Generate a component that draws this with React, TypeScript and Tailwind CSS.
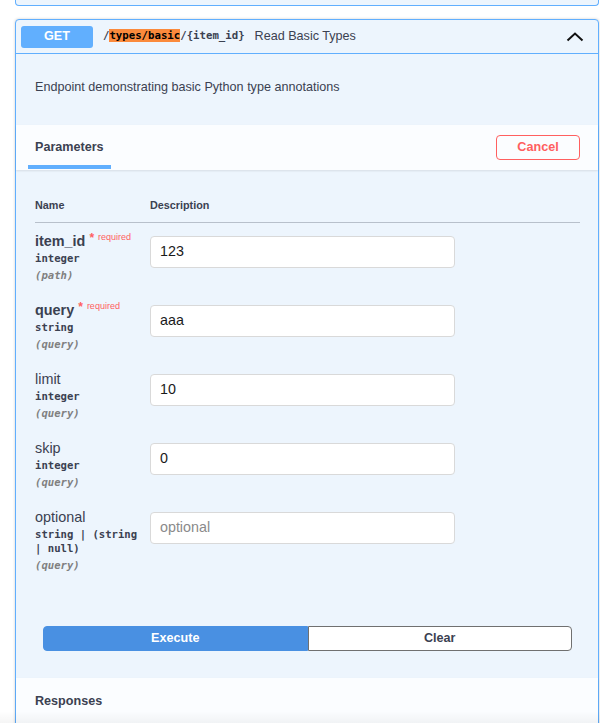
import React from "react";

const sans = { fontFamily: '"Liberation Sans", Arial, sans-serif' };

type P = {
  name: string;
  required?: boolean;
  type: string;
  loc: string;
  value?: string;
  placeholder?: string;
};

const params: P[] = [
  { name: "item_id", required: true, type: "integer", loc: "(path)", value: "123" },
  { name: "query", required: true, type: "string", loc: "(query)", value: "aaa" },
  { name: "limit", type: "integer", loc: "(query)", value: "10" },
  { name: "skip", type: "integer", loc: "(query)", value: "0" },
  { name: "optional", type: "string | (string | null)", loc: "(query)", placeholder: "optional" },
];

function Row({ p }: { p: P }) {
  return (
    <div className="flex h-[69px] items-start">
      <div className="w-[115px] shrink-0 pr-[4px] pt-[10px]">
        <div className="flex items-start leading-[17px]">
          <span
            className={`text-[14.4px] text-[#3b4151] ${p.required ? "font-semibold" : "font-normal"}`}
          >
            {p.name}
          </span>
          {p.required && (
            <span className="relative top-[-2px] ml-[4px] flex items-start text-[#ff6060]">
              <span className="text-[12px] font-bold leading-[14px]">*</span>
              <span className="ml-[4px] text-[9px] leading-[12px]">required</span>
            </span>
          )}
        </div>
        <div className="pt-px font-['DejaVu_Sans_Mono',monospace] text-[10.6px] font-bold leading-[14px] text-[#3b4151]">
          {p.type}
        </div>
        <div className="mt-[3px] font-['DejaVu_Sans_Mono',monospace] text-[10.6px] italic font-bold leading-[14px] text-[#808080]">
          {p.loc}
        </div>
      </div>
      <div className="mt-[13px] flex h-[32px] w-[305px] items-center rounded-[4px] border border-[#d9d9d9] bg-white px-[9px] text-[14.3px]">
        {p.value ? (
          <span className="text-[#1a1a1a]">{p.value}</span>
        ) : (
          <span className="text-[#8a8a8a]">{p.placeholder}</span>
        )}
      </div>
    </div>
  );
}

export default function App() {
  return (
    <div className="relative h-[723px] overflow-hidden bg-white pl-[15px] pr-px" style={sans}>
      {/* previous block bottom */}
      <div className="h-[6px] rounded-b-[4px] border-x border-b border-[#61affe] bg-[#edf5fd]" />

      <div className="mt-[13px] rounded-[4px] border border-[#61affe] bg-[#edf5fd] shadow-[0_0_3px_rgba(0,0,0,0.19)]">
        {/* summary */}
        <div className="flex h-[34px] items-center border-b border-[#61affe] px-[5px]">
          <div className="flex h-[22px] w-[72px] items-center justify-center rounded-[3px] bg-[#61affe] text-[12.6px] font-bold text-white">
            GET
          </div>
          <div className="ml-[10px] font-['DejaVu_Sans_Mono',monospace] text-[10.7px] font-semibold text-[#3b4151]">
            /<span className="bg-[#fb8a3c] text-black">types/basic</span>/{"{item_id}"}
          </div>
          <div className="ml-[10px] text-[12.6px] text-[#3b4151]">Read Basic Types</div>
          <div className="ml-auto mr-[9px] flex items-center">
            <svg width="18" height="10" viewBox="0 0 18 10" fill="none">
              <path d="M1.5 8.5 L9 1.5 L16.5 8.5" stroke="#111" strokeWidth="2" />
            </svg>
          </div>
        </div>

        {/* description */}
        <div className="px-[19px] pb-[29px] pt-[24px] text-[12.6px] leading-[18px] text-[#3b4151]">
          Endpoint demonstrating basic Python type annotations
        </div>

        {/* parameters header */}
        <div className="flex h-[45px] items-stretch justify-between bg-white/80 pl-[12px] pr-[18px] shadow-[0_1px_2px_rgba(0,0,0,0.1)]">
          <div className="mb-px flex items-center border-b-4 border-[#61affe] px-[7px] pt-[4px] text-[12.6px] font-bold text-[#3b4151]">
            Parameters
          </div>
          <div className="flex items-center">
            <div className="flex h-[25px] w-[84px] items-center justify-center rounded-[4px] border-[1.5px] border-[#ff6060] bg-transparent text-[12.6px] font-bold text-[#ff6060]">
              Cancel
            </div>
          </div>
        </div>

        {/* table */}
        <div className="pl-[19px] pr-[18px]">
          <div className="mt-[27px] flex border-b border-[#b8c0cb] pb-[9px] text-[10.8px] font-bold leading-[16px] text-[#3b4151]">
            <div className="w-[115px]">Name</div>
            <div>Description</div>
          </div>
          {params.map((p) => (
            <Row key={p.name} p={p} />
          ))}
        </div>

        {/* execute */}
        <div className="mb-[27px] ml-[27px] mr-[26px] mt-[58px] flex h-[25px]">
          <div className="flex flex-1 items-center justify-center rounded-l-[4px] border border-[#4990e2] bg-[#4990e2] text-[12.6px] font-bold text-white">
            Execute
          </div>
          <div className="flex flex-1 items-center justify-center rounded-r-[4px] border-[1.5px] border-[#707070] bg-white text-[12.6px] font-bold text-[#3b4151]">
            Clear
          </div>
        </div>

        {/* responses header */}
        <div className="flex h-[45px] items-center bg-white/80 px-[19px] pt-[1px] text-[12.6px] font-bold text-[#3b4151] shadow-[0_1px_2px_rgba(0,0,0,0.1)]">
          Responses
        </div>
        <div className="h-[200px]" />
      </div>

      <div className="pointer-events-none absolute inset-x-0 bottom-0 h-[12px] bg-gradient-to-b from-transparent to-black/[0.04]" />
    </div>
  );
}
